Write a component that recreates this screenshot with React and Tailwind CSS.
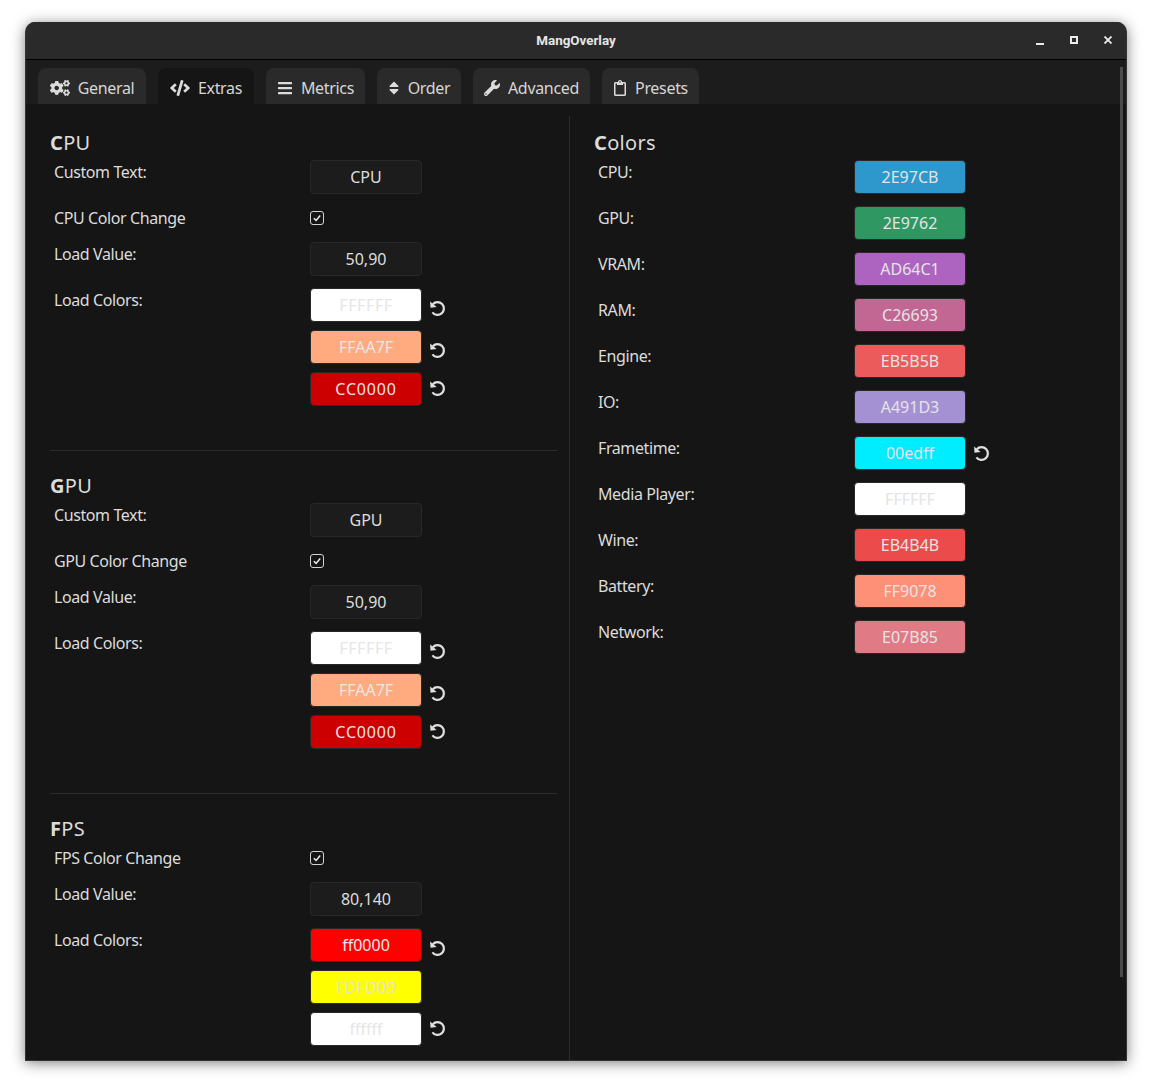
import React from "react";
import { FaCogs, FaCode, FaBars, FaSort, FaWrench, FaRegClipboard } from "react-icons/fa";

const Reset = ({ className = "" }) => (
  <svg viewBox="0 0 16 16" className={`w-[17px] h-[17px] text-[#e0e0e0] ${className}`} fill="none">
    <path d="M3.6 3.9 A6 6 0 1 1 3.2 11.6" stroke="currentColor" strokeWidth="2.1" />
    <path d="M1 1.4 L1.4 7.2 L7.2 6.6 Z" fill="currentColor" />
  </svg>
);

const tabs = [
  { label: "General", Icon: FaCogs, w: "w-[108px]", iw: "w-5" },
  { label: "Extras", Icon: FaCode, w: "w-[96px]", iw: "w-5" },
  { label: "Metrics", Icon: FaBars, w: "w-[99px]", iw: "w-4" },
  { label: "Order", Icon: FaSort, w: "w-[84px]", iw: "w-3" },
  { label: "Advanced", Icon: FaWrench, w: "w-[117px]", iw: "w-4" },
  { label: "Presets", Icon: FaRegClipboard, w: "w-[97px]", iw: "w-[14px]" },
];

const Field = ({ value, bg, text = "text-[#dedede]", reset, resetCls = "mt-[9px]", track = "" }) => (
  <div className="flex">
    <div
      className={`w-[112px] h-[34px] rounded-[4px] border border-[#282828] flex items-center justify-center text-[16px] ${track} ${bg || "bg-[#1c1c1c]"} ${text}`}
    >
      {value}
    </div>
    {reset && <Reset className={`ml-[7px] ${resetCls}`} />}
  </div>
);

const Label = ({ children, cls = "pt-[2px]" }) => (
  <div className={`w-[260px] shrink-0 pl-1 text-[#dcdcdc] text-[16px] tracking-[-0.4px] leading-5 ${cls}`}>{children}</div>
);

const Heading = ({ first, rest }) => (
  <div className="text-[20px] leading-7 tracking-[0.3px] text-[#dcdcdc]">
    <span className="font-bold">{first}</span>
    {rest}
  </div>
);

const Check = () => (
  <div className="flex items-center h-6">
    <div className="w-[14px] h-[14px] rounded-[3px] border border-[#d4d4d4] flex items-center justify-center">
      <svg viewBox="0 0 10 10" className="w-[10px] h-[10px]" fill="none">
        <path d="M1.8 5.2 L4.1 7.4 L8.2 2.6" stroke="#ececec" strokeWidth="1.5" />
      </svg>
    </div>
  </div>
);

const CheckRow = ({ label }) => (
  <div className="flex h-6 items-center">
    <Label cls="">{label}</Label>
    <Check />
  </div>
);

const LoadColors = ({ colors }) => (
  <div className="flex mt-3">
    <Label>Load Colors:</Label>
    <div className="flex flex-col gap-2">
      {colors.map((c) => (
        <Field key={c.value} {...c} />
      ))}
    </div>
  </div>
);

const Section = ({ first, rest, custom, check, load, colors }) => (
  <div>
    <Heading first={first} rest={rest} />
    <div className="flex flex-col">
      {custom && (
        <div className="flex mt-[3px]">
          <Label>Custom Text:</Label>
          <Field value={custom} />
        </div>
      )}
      <div className={custom ? "mt-3" : "mt-[3px]"}>
        <CheckRow label={check} />
      </div>
      <div className="flex mt-3">
        <Label>Load Value:</Label>
        <Field value={load} />
      </div>
      <LoadColors colors={colors} />
    </div>
  </div>
);

const warm = [
  { value: "FFFFFF", bg: "bg-[#ffffff]", text: "text-[#e6e6e6]", reset: true, resetCls: "mt-[12px]", track: "tracking-[0.6px]" },
  { value: "FFAA7F", bg: "bg-[#ffaa7f]", text: "text-[#e8e8e8]", reset: true, resetCls: "mt-[12px]" },
  { value: "CC0000", bg: "bg-[#cc0000]", text: "text-[#e4e4e4]", reset: true, resetCls: "mt-[8px]", track: "tracking-[0.8px]" },
];

const fps = [
  { value: "ff0000", bg: "bg-[#ff0000]", text: "text-[#ececec]", reset: true, resetCls: "mt-[12px]" },
  { value: "FDFD09", bg: "bg-[#ffff00]", text: "text-[#e8e8c0]", track: "tracking-[0.4px]" },
  { value: "ffffff", bg: "bg-[#ffffff]", text: "text-[#e6e6e6]", reset: true, resetCls: "mt-[8px]" },
];

const colors = [
  ["CPU:", "2E97CB", "bg-[#2e97cb]"],
  ["GPU:", "2E9762", "bg-[#2e9762]"],
  ["VRAM:", "AD64C1", "bg-[#ad64c1]"],
  ["RAM:", "C26693", "bg-[#c26693]"],
  ["Engine:", "EB5B5B", "bg-[#eb5b5b]"],
  ["IO:", "A491D3", "bg-[#a491d3]"],
  ["Frametime:", "00edff", "bg-[#00edff]", true],
  ["Media Player:", "FFFFFF", "bg-[#ffffff]"],
  ["Wine:", "EB4B4B", "bg-[#eb4b4b]"],
  ["Battery:", "FF9078", "bg-[#ff9078]"],
  ["Network:", "E07B85", "bg-[#e07b85]"],
];

export default function App() {
  return (
    <div
      className="w-[1152px] h-[1089px] bg-white pl-[25px] pt-[22px] overflow-hidden"
      style={{ fontFamily: '"Noto Sans", sans-serif' }}
    >
      <div className="relative w-[1102px] h-[1039px] rounded-t-[10px] overflow-hidden bg-[#151515] flex flex-col shadow-[0_2px_14px_rgba(0,0,0,0.5)] border-x border-b border-[#333333]">
        <div className="relative h-[38px] shrink-0 pt-[2px] bg-[#2a2a2a] border-b border-black flex items-center justify-center">
          <span
            className="text-[13.4px] font-bold text-[#e6e6e6]"
            style={{ fontFamily: "Roboto, sans-serif" }}
          >
            MangOverlay
          </span>
          <div className="absolute right-0 top-0 h-full">
            <div className="relative h-full w-[100px]">
              <div className="absolute left-[10px] top-[21px] w-2 h-[2px] bg-[#ececec]" />
              <div className="absolute left-[44px] top-[14px] w-2 h-2 border-2 border-[#ececec]" />
              <svg viewBox="0 0 8 8" className="absolute left-[78px] top-[14px] w-2 h-2">
                <path d="M0.5 0.5 L7.5 7.5 M7.5 0.5 L0.5 7.5" stroke="#ececec" strokeWidth="1.8" />
              </svg>
            </div>
          </div>
        </div>

        <div className="h-[44px] shrink-0 bg-[#1c1c1c] flex items-end gap-3 pl-3">
          {tabs.map(({ label, Icon, w, iw }) => (
            <div
              key={label}
              className={`${w} h-9 pt-1 rounded-t-lg flex items-center justify-center gap-2 text-[16px] tracking-[-0.32px] text-[#d6d6d6] ${label === "Extras" ? "bg-[#151515]" : "bg-[#2a2a2a]"}`}
            >
              <Icon className={`${iw} h-4 text-[#dcdcdc]`} />
              <span>{label}</span>
            </div>
          ))}
        </div>

        <div className="flex flex-1 min-h-0 pt-3">
          <div className="w-[544px] shrink-0 border-r border-[#2c2c2c] pl-6 pr-3 pt-[13px]">
            <Section first="C" rest="PU" custom="CPU" check="CPU Color Change" load="50,90" colors={warm} />
            <div className="border-t border-[#2c2c2c] mt-11 mb-[21px]" />
            <Section first="G" rest="PU" custom="GPU" check="GPU Color Change" load="50,90" colors={warm} />
            <div className="border-t border-[#2c2c2c] mt-11 mb-[21px]" />
            <Section first="F" rest="PS" check="FPS Color Change" load="80,140" colors={fps} />
          </div>
          <div className="flex-1 pl-6 pt-[13px]">
            <Heading first="C" rest="olors" />
            <div className="flex flex-col gap-3 mt-[3px]">
              {colors.map(([l, v, bg, r]) => (
                <div key={l} className="flex">
                  <Label>{l}</Label>
                  <Field value={v} bg={bg} text="text-[#e4e4e4]" reset={r} resetCls="mt-[9px]" />
                </div>
              ))}
            </div>
          </div>
        </div>

        <div className="absolute left-[1094px] top-[45px] w-[3px] h-[910px] bg-[#4a4a4a]" />
      </div>
    </div>
  );
}
